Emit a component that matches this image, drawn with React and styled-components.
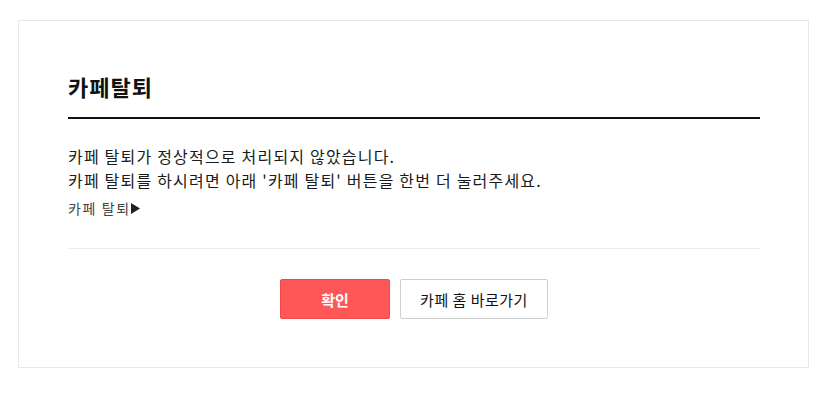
import React from "react";
import styled, { createGlobalStyle } from "styled-components";

const Global = createGlobalStyle`
  html, body { margin: 0; padding: 0; background: #fff; }
  body {
    font-family: "Noto Sans CJK KR", "Noto Sans", "Liberation Sans", sans-serif;
    color: #222;
  }
  * { box-sizing: border-box; }
`;

const Page = styled.div`
  padding: 20px 0 0 18px;
`;

const Card = styled.section`
  width: 791px;
  border: 1px solid #e8e8e8;
  padding: 50px 48px 48px 49px;
  background: #fff;
`;

const Title = styled.h2`
  margin: 0;
  font-size: 22px;
  line-height: 30px;
  letter-spacing: 1px;
  font-weight: 700;
  color: #111;
  padding-bottom: 16px;
  border-bottom: 2px solid #111;
`;

const Message = styled.div`
  margin-top: 25px;
`;

const Line = styled.p`
  margin: 0;
  font-size: 16px;
  line-height: 24px;
  letter-spacing: 1.2px;
  color: #1a1a1a;
`;

const LinkLine = styled.a`
  display: inline-flex;
  align-items: center;
  margin-top: 6px;
  font-size: 14px;
  line-height: 20px;
  letter-spacing: 1.6px;
  color: #444;
  text-decoration: none;
  cursor: pointer;
`;

const Arrow = styled.svg`
  display: block;
  width: 9px;
  height: 11px;
  margin-left: 0;
  margin-top: 1px;
`;

const Divider = styled.hr`
  margin: 29px 0 0;
  border: 0;
  border-top: 1px solid #ececec;
  height: 0;
`;

const Buttons = styled.div`
  margin-top: 30px;
  display: flex;
  justify-content: center;
  gap: 10px;
`;

const Button = styled.button`
  height: 40px;
  width: ${(p) => p.$w}px;
  border-radius: 2px;
  font-family: inherit;
  font-size: 15px;
  letter-spacing: ${(p) => (p.$primary ? "0" : "0.5px")};
  font-weight: ${(p) => (p.$primary ? 700 : 400)};
  color: ${(p) => (p.$primary ? "#fff" : "#111")};
  background: ${(p) => (p.$primary ? "#ff5757" : "#fff")};
  border: 1px solid ${(p) => (p.$primary ? "#f24848" : "#cfcfcf")};
  padding: 0;
  cursor: pointer;
`;

export default function App() {
  return (
    <>
      <Global />
      <Page>
        <Card>
          <Title>카페탈퇴</Title>
          <Message>
            <Line>카페 탈퇴가 정상적으로 처리되지 않았습니다.</Line>
            <Line>카페 탈퇴를 하시려면 아래 '카페 탈퇴' 버튼을 한번 더 눌러주세요.</Line>
            <LinkLine>
              카페 탈퇴
              <Arrow viewBox="0 0 9 11">
                <polygon points="0,0 9,5.5 0,11" fill="#222" />
              </Arrow>
            </LinkLine>
          </Message>
          <Divider />
          <Buttons>
            <Button $primary $w={110}>확인</Button>
            <Button $w={148}>카페 홈 바로가기</Button>
          </Buttons>
        </Card>
      </Page>
    </>
  );
}
